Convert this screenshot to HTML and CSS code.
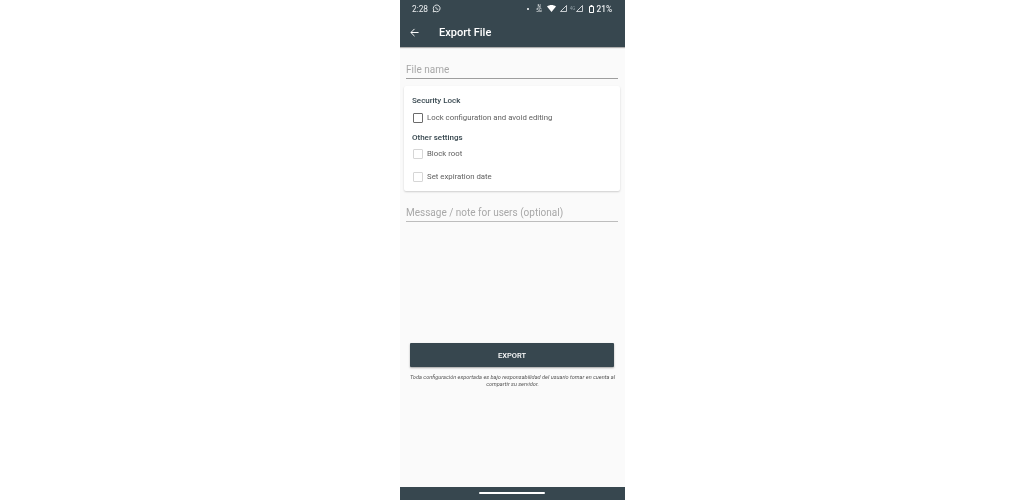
FILE: index.html
```html
<!DOCTYPE html>
<html lang="en">
<head>
    <meta charset="UTF-8">
    <meta name="viewport" content="width=device-width, initial-scale=1.0">
    <title>Export File</title>
    <link rel="stylesheet" href="styles.css">
</head>
<body>
    <div class="phone">
        <div class="status-bar">
            <span class="clock">2:28</span>
            <svg class="status-icon chat" width="9" height="9" viewBox="0 0 24 24" fill="none" stroke="#eceff1" stroke-width="2.4">
                <path d="M3 21l1.6-5A9 9 0 1 1 8 19.500z"/>
                <path d="M9 8c0 4 3 7 7 7l1-2-2.500-1-1 1c-1-.5-2-1.500-2.500-2.500l1-1L11 7z" fill="#eceff1" stroke="none"/>
            </svg>
            <span class="status-spacer"></span>
            <span class="dot"></span>
            <span class="tiny-label nfc">N<br>5G</span>
            <svg class="status-icon wifi" width="9" height="7" viewBox="0 0 18 14"><path d="M0 3C5-1 13-1 18 3L9 14z" fill="#fff"/></svg>
            <svg class="status-icon signal" width="7" height="7" viewBox="0 0 14 14" fill="none" stroke="#eceff1" stroke-width="1.600"><path d="M1 13L13 1v12z"/></svg>
            <span class="tiny-label faded">4G</span>
            <svg class="status-icon" width="7" height="7" viewBox="0 0 14 14" fill="none" stroke="#eceff1" stroke-width="1.600"><path d="M1 13L13 1v12z"/></svg>
            <svg class="status-icon battery" width="5" height="8" viewBox="0 0 10 16" fill="none" stroke="#fff" stroke-width="2"><path d="M1 3h8v12H1z"/><path d="M3 1h4"/></svg>
            <span class="battery-text">21%</span>
        </div>

        <header class="toolbar">
            <svg class="back-icon" width="9" height="9" viewBox="0 0 20 20" fill="none" stroke="#fff" stroke-width="2.200">
                <path d="M19 10H2"/>
                <path d="M10 2l-8 8 8 8"/>
            </svg>
            <h1 class="toolbar-title">Export File</h1>
        </header>

        <main class="content">
            <div class="text-field file-name">File name</div>

            <section class="settings-card">
                <h2 class="card-heading">Security Lock</h2>
                <label class="check-row top">
                    <span class="check-box strong"></span>
                    <span>Lock configuration and avoid editing</span>
                </label>
                <h2 class="card-heading second">Other settings</h2>
                <label class="check-row dim">
                    <span class="check-box"></span>
                    <span>Block root</span>
                </label>
                <label class="check-row dim last">
                    <span class="check-box"></span>
                    <span>Set expiration date</span>
                </label>
            </section>

            <div class="text-field message">Message / note for users (optional)</div>

            <button class="export-btn">EXPORT</button>
            <p class="disclaimer">Toda configuración exportada es bajo responsabilidad del usuario tomar en cuenta al compartir su servidor.</p>
        </main>

        <footer class="nav-bar"><span class="home-pill"></span></footer>
    </div>
</body>
</html>
```

FILE: styles.css
```css
:root {
    --bar-bg: #37474f;
    --page-bg: #fafafa;
    --text-main: #37474f;
    --hint: #a8a8a8;
}

* {
    margin: 0;
    padding: 0;
    box-sizing: border-box;
}

body {
    background: #ffffff;
    font-family: Roboto, "Liberation Sans", sans-serif;
}

/* the screenshot is a scaled down photo, so everything is a bit soft */
.phone {
    width: 225px;
    height: 500px;
    margin: 0 auto 0 400px;
    background: var(--page-bg);
    display: flex;
    flex-direction: column;
    overflow: hidden;
    filter: blur(0.3px);
}

/* Status bar */
.status-bar {
    height: 16px;
    background: var(--bar-bg);
    color: #eceff1;
    display: flex;
    align-items: center;
    padding: 1px 13px 0 12px;
    font-size: 8.300px;
}

.clock {
    margin-right: 4px;
}

.status-spacer {
    flex: 1;
}

.dot {
    width: 2px;
    height: 2px;
    border-radius: 50%;
    background: #fff;
    margin-right: 7px;
}

.tiny-label {
    font-size: 4.500px;
    line-height: 4px;
    text-align: center;
    margin-right: 5px;
}

.tiny-label.faded {
    color: #8d9ba2;
    margin: 0 1px 0 3px;
}

.status-icon {
    flex: none;
}

.status-icon.wifi {
    margin-right: 4px;
}

.status-icon.battery {
    margin-left: 6px;
    margin-right: 2px;
}

.battery-text {
    font-weight: 500;
}

/* Toolbar */
.toolbar {
    height: 31px;
    background: var(--bar-bg);
    display: flex;
    align-items: center;
    padding: 2px 0 0 10px;
    box-shadow: 0 1px 1px rgba(0, 0, 0, 0.3);
    position: relative;
}

.toolbar-title {
    font-size: 11px;
    font-weight: 500;
    color: #fff;
    margin-left: 20px;
}

/* Form */
.content {
    flex: 1;
    display: flex;
    flex-direction: column;
}

.text-field {
    margin: 0 7px 0 6px;
    font-size: 10px;
    line-height: 12px;
    color: var(--hint);
    border-bottom: 1px solid #9e9e9e;
}

.file-name {
    margin-top: 16px;
    padding-bottom: 2px;
    padding-top: 1px;
}

.message {
    margin-top: 15px;
    padding-bottom: 2px;
    padding-top: 1px;
    border-bottom-color: #bdbdbd;
}

.settings-card {
    margin: 7px 5px 0 4px;
    height: 105px;
    background: #fff;
    border-radius: 2px;
    box-shadow: 0 1px 2px rgba(0, 0, 0, 0.18);
    padding: 10px 9px 0 8px;
}

.card-heading {
    font-size: 8px;
    line-height: 9px;
    font-weight: 500;
    color: var(--text-main);
}

.card-heading.second {
    margin-top: 9px;
}

.check-row {
    display: flex;
    align-items: center;
    height: 13px;
    margin-top: 5px;
    padding-left: 1px;
    font-size: 7.800px;
    color: #616161;
}

.check-row.top {
    margin-top: 6px;
}

.check-row.last {
    margin-top: 10px;
}

.check-box {
    width: 10px;
    height: 10px;
    border: 1px solid #d6d6d6;
    border-radius: 1px;
    margin-right: 4px;
    flex: none;
}

.check-box.strong {
    border-color: #6b6b6b;
}

.export-btn {
    margin: 121px 11px 0 10px;
    height: 24px;
    flex: none;
    background: var(--bar-bg);
    color: #fff;
    border: none;
    border-radius: 1px;
    font-family: inherit;
    font-size: 7.500px;
    font-weight: 500;
    padding-top: 1px;
    box-shadow: 0 1px 2px rgba(0, 0, 0, 0.35);
}

.disclaimer {
    margin: 7px 6px 0 6px;
    font-size: 5.600px;
    line-height: 7px;
    font-style: italic;
    text-align: center;
    color: #555;
}

.nav-bar {
    height: 13px;
    background: var(--bar-bg);
    display: flex;
    justify-content: center;
    padding: 5px 1px 0 0;
}

.home-pill {
    width: 66px;
    height: 2px;
    background: #fff;
    border-radius: 1px;
}
```
